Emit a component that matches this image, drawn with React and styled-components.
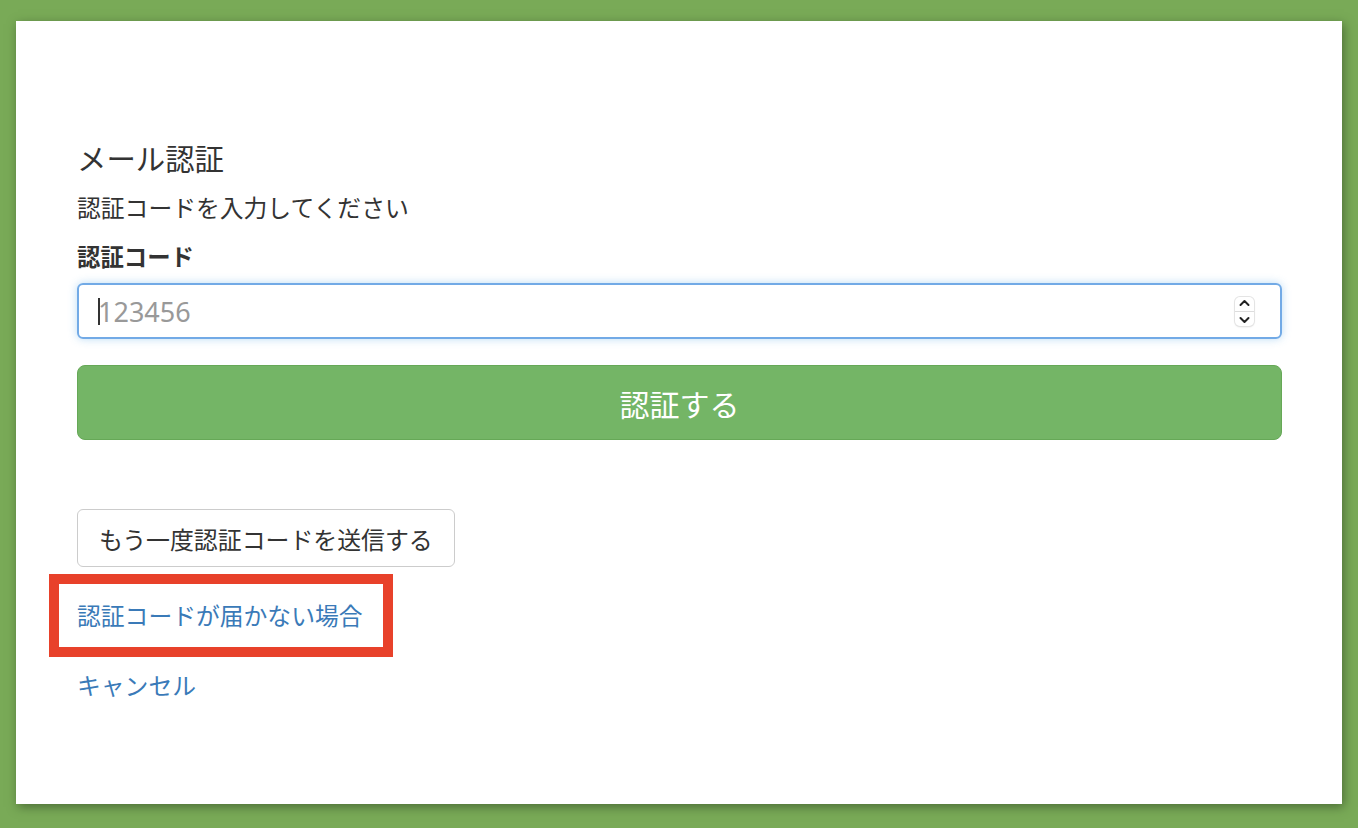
import React from "react";
import styled, { createGlobalStyle } from "styled-components";

const GlobalStyle = createGlobalStyle`
  html, body {
    margin: 0;
    padding: 0;
    background: #79aa57;
  }
  body {
    font-family: "Noto Sans CJK JP", "Noto Sans", sans-serif;
    color: #333;
  }
`;

const Page = styled.div`
  padding: 21px 16px 24px;
  min-height: 828px;
  box-sizing: border-box;
`;

const Panel = styled.main`
  background: #fff;
  height: 783px;
  box-sizing: border-box;
  padding: 119px 60px 0 61px;
  box-shadow: 2px 3px 10px rgba(40, 60, 30, 0.55);
`;

const Title = styled.h1`
  margin: 0;
  font-size: 29.4px;
  line-height: 34px;
  font-weight: 400;
  color: #333;
`;

const Lead = styled.p`
  margin: 17px 0 0;
  font-size: 23.8px;
  line-height: 32px;
`;

const Label = styled.label`
  display: block;
  margin: 17px 0 0;
  font-size: 23.4px;
  line-height: 32px;
  font-weight: 700;
`;

const Field = styled.div`
  margin-top: 11px;
  height: 56px;
  box-sizing: border-box;
  display: flex;
  align-items: center;
  padding: 0 26px 0 19px;
  border: 2px solid #72aae6;
  border-radius: 6px;
  box-shadow: 0 0 8px rgba(102, 175, 233, 0.45);
`;

const Caret = styled.span`
  width: 2px;
  height: 27px;
  margin-right: -2px;
  background: #333;
`;

const Input = styled.input`
  flex: 1;
  border: none;
  outline: none;
  padding: 0;
  font-family: "Noto Sans", "Noto Sans CJK JP", sans-serif;
  font-size: 27px;
  color: #333;
  background: transparent;
  &::placeholder {
    color: #999;
  }
`;

const Spinner = styled.span`
  width: 19px;
  height: 29px;
  border-radius: 5px;
  background: #fff;
  box-shadow: 0 0 0 1px #e4e4e4, 0 1px 2px rgba(0, 0, 0, 0.15);
  display: flex;
  flex-direction: column;
  align-items: center;
  justify-content: space-around;
`;

const SpinDivider = styled.span`
  width: 100%;
  height: 1px;
  background: #ddd;
`;

const Submit = styled.button`
  display: block;
  width: 100%;
  margin-top: 26px;
  height: 75px;
  border: 1.5px solid #66a857;
  border-radius: 8px;
  background: #74b566;
  color: #fff;
  font-family: inherit;
  font-size: 30px;
  cursor: pointer;
`;

const Resend = styled.button`
  display: block;
  margin-top: 69px;
  height: 58px;
  padding: 0 21px;
  border: 1.5px solid #ccc;
  border-radius: 6px;
  background: #fff;
  color: #333;
  font-family: inherit;
  font-size: 23.9px;
  cursor: pointer;
`;

const Highlight = styled.div`
  display: inline-block;
  margin: 7px 0 0 -28px;
  padding: 15px 20px 16px 18px;
  border: 10px solid #e8412a;
`;

const LinkRow = styled.div`
  margin-top: ${({ $top }) => $top || 0}px;
`;

const TextLink = styled.a`
  font-size: 23.8px;
  line-height: 32px;
  color: #3a7ab8;
  text-decoration: none;
`;

function Chevron({ up }) {
  return (
    <svg width="11" height="8" viewBox="0 0 11 8">
      <path
        d={up ? "M1.5 6 L5.5 2 L9.5 6" : "M1.5 2 L5.5 6 L9.5 2"}
        fill="none"
        stroke="#222"
        strokeWidth="2"
        strokeLinecap="round"
        strokeLinejoin="round"
      />
    </svg>
  );
}

export default function App() {
  return (
    <>
      <GlobalStyle />
      <Page>
        <Panel>
          <Title>メール認証</Title>
          <Lead>認証コードを入力してください</Lead>
          <Label htmlFor="code">認証コード</Label>
          <Field>
            <Caret />
            <Input id="code" placeholder="123456" />
            <Spinner>
              <Chevron up />
              <SpinDivider />
              <Chevron />
            </Spinner>
          </Field>
          <Submit>認証する</Submit>
          <Resend>もう一度認証コードを送信する</Resend>
          <Highlight>
            <TextLink href="#">認証コードが届かない場合</TextLink>
          </Highlight>
          <LinkRow $top={12}>
            <TextLink href="#">キャンセル</TextLink>
          </LinkRow>
        </Panel>
      </Page>
    </>
  );
}
